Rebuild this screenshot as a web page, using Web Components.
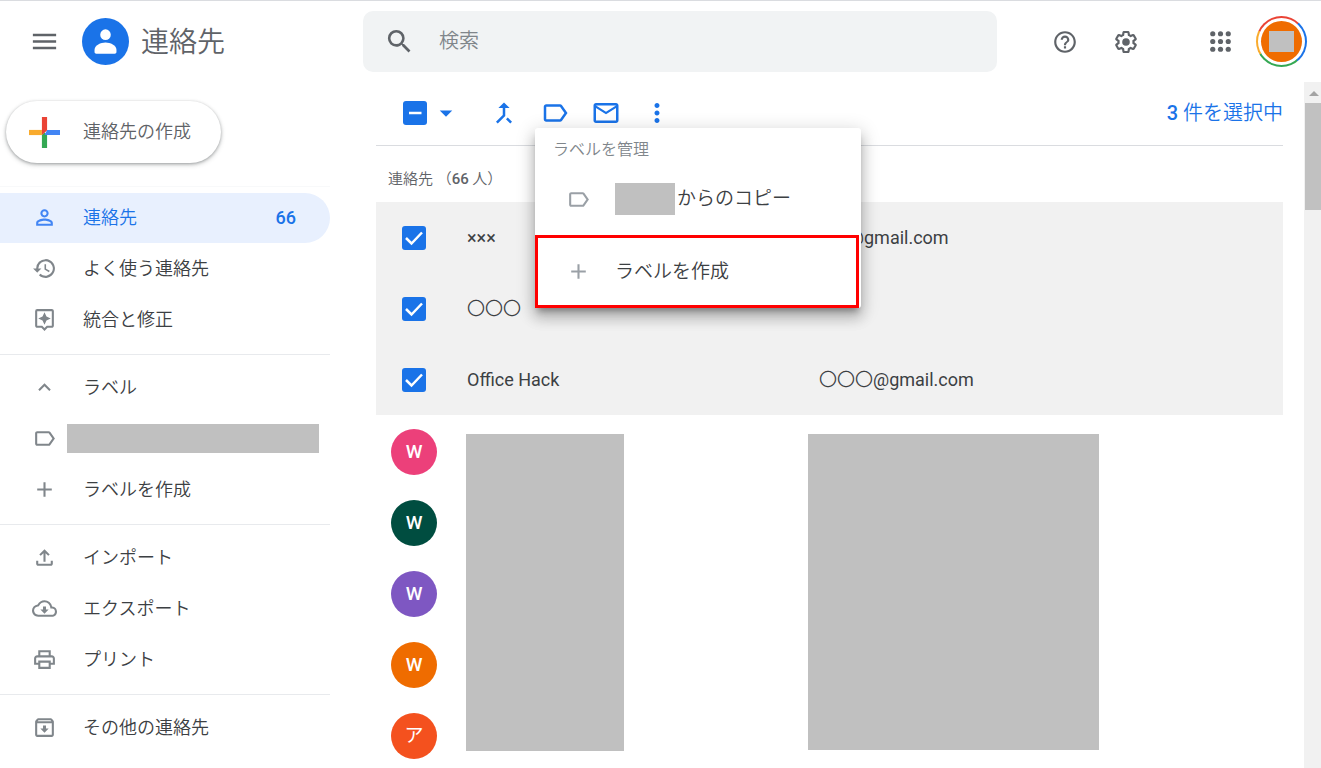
<!DOCTYPE html>
<html lang="ja">
<head>
<meta charset="utf-8">
<title>連絡先</title>
<style>
  html, body { margin: 0; height: 100%; overflow: hidden; }
  body { font-family: Roboto, "Noto Sans CJK JP", sans-serif; color: #3c4043; background: #fff; }
</style>
</head>
<body>
<contacts-app></contacts-app>
<script>
const ICONS = {
  menu: '<path d="M3 18h18v-2H3v2zm0-5h18v-2H3v2zm0-7v2h18V6H3z"/>',
  search: '<path d="M15.5 14h-.79l-.28-.27A6.47 6.47 0 0 0 16 9.5 6.5 6.5 0 1 0 9.5 16c1.61 0 3.09-.59 4.23-1.57l.27.28v.79l5 4.99L20.49 19l-4.99-5zm-6 0a4.5 4.5 0 1 1 0-9 4.5 4.5 0 0 1 0 9z"/>',
  help: '<path d="M11 18h2v-2h-2v2zm1-16C6.48 2 2 6.48 2 12s4.48 10 10 10 10-4.48 10-10S17.52 2 12 2zm0 18c-4.41 0-8-3.59-8-8s3.59-8 8-8 8 3.59 8 8-3.59 8-8 8zm0-14a4 4 0 0 0-4 4h2a2 2 0 1 1 4 0c0 2-3 1.750-3 5h2c0-2.250 3-2.500 3-5a4 4 0 0 0-4-4z"/>',
  settings: '<path d="M13.850 22.250h-3.700c-.740 0-1.360-.540-1.450-1.270l-.270-1.890c-.270-.140-.530-.290-.790-.460l-1.800.720c-.700.260-1.470-.030-1.810-.650L2.200 15.530c-.350-.660-.200-1.440.360-1.880l1.530-1.190c-.010-.150-.020-.300-.020-.460 0-.150.010-.310.020-.460l-1.520-1.190c-.590-.450-.740-1.260-.370-1.880l1.850-3.190c.340-.620 1.110-.900 1.790-.630l1.810.730c.260-.170.520-.320.780-.460l.270-1.910c.090-.700.710-1.250 1.440-1.250h3.700c.740 0 1.360.540 1.450 1.270l.270 1.890c.270.140.530.290.790.460l1.800-.720c.710-.260 1.480.030 1.820.650l1.840 3.180c.360.660.200 1.440-.360 1.880l-1.520 1.190c.010.150.020.300.020.460s-.010.310-.020.460l1.520 1.190c.560.450.720 1.230.370 1.860l-1.860 3.220c-.340.620-1.110.900-1.800.630l-1.800-.720c-.260.170-.520.320-.780.460l-.270 1.910c-.100.680-.720 1.220-1.460 1.220zm-3.230-2h2.760l.370-2.550.530-.220c.440-.180.880-.440 1.340-.780l.450-.340 2.380.960 1.380-2.400-2.030-1.580.070-.560c.030-.260.060-.510.060-.780s-.030-.530-.060-.780l-.070-.560 2.030-1.580-1.390-2.400-2.390.960-.450-.350c-.420-.320-.870-.580-1.330-.770l-.520-.220-.370-2.550h-2.760l-.370 2.550-.530.210c-.440.190-.880.440-1.340.790l-.450.330-2.380-.950-1.390 2.390 2.030 1.580-.070.560a7 7 0 0 0-.060.790c0 .260.020.530.060.780l.070.560-2.030 1.580 1.380 2.400 2.390-.960.450.350c.430.330.860.580 1.330.770l.530.220.380 2.550z"/><circle cx="12" cy="12" r="3.500"/>',
  apps: '<g><circle cx="6" cy="6" r="2"/><circle cx="12" cy="6" r="2"/><circle cx="18" cy="6" r="2"/><circle cx="6" cy="12" r="2"/><circle cx="12" cy="12" r="2"/><circle cx="18" cy="12" r="2"/><circle cx="6" cy="18" r="2"/><circle cx="12" cy="18" r="2"/><circle cx="18" cy="18" r="2"/></g>',
  person: '<path d="M12 12c2.210 0 4-1.790 4-4s-1.790-4-4-4-4 1.790-4 4 1.790 4 4 4zm0-6a2 2 0 1 1 0 4 2 2 0 0 1 0-4zm0 7c-2.670 0-8 1.340-8 4v3h16v-3c0-2.660-5.330-4-8-4zm6 5H6v-.990c.2-.720 3.300-2.010 6-2.010s5.800 1.290 6 2v1z"/>',
  history: '<path d="M13 3a9 9 0 0 0-9 9H1l3.890 3.890.070.140L9 12H6a7 7 0 1 1 2.060 4.940l-1.420 1.420A9 9 0 1 0 13 3zm-1 5v5l4.250 2.520.770-1.280-3.520-2.090V8z"/>',
  fix: '<path d="M19 2H5a2 2 0 0 0-2 2v14c0 1.100.900 2 2 2h4l3 3 3-3h4c1.100 0 2-.900 2-2V4c0-1.100-.900-2-2-2zm0 16h-4.830L12 20.170 9.830 18H5V4h14v14zm-7-1 1.880-4.120L18 11l-4.120-1.880L12 5l-1.880 4.120L6 11l4.120 1.880z"/>',
  up: '<path d="m12 8-6 6 1.410 1.410L12 10.830l4.590 4.580L18 14z"/>',
  label: '<path d="M17.630 5.840C17.270 5.330 16.670 5 16 5L5 5.010C3.900 5.010 3 5.900 3 7v10c0 1.100.900 1.990 2 1.990L16 19c.670 0 1.270-.330 1.630-.840L22 12l-4.370-6.160zM16 17H5V7h11l3.550 5L16 17z"/>',
  plus: '<path d="M19 13h-6v6h-2v-6H5v-2h6V5h2v6h6v2z"/>',
  upload: '<path d="M11 16h2V7.830l2.590 2.580L17 9l-5-5-5 5 1.410 1.410L11 7.830V16zm7-1v3H6v-3H4v3c0 1.100.900 2 2 2h12c1.100 0 2-.900 2-2v-3h-2z"/>',
  cloud: '<path d="M19.350 10.040A7.490 7.490 0 0 0 12 4C9.110 4 6.600 5.640 5.350 8.040A5.994 5.994 0 0 0 0 14c0 3.310 2.690 6 6 6h13c2.760 0 5-2.240 5-5 0-2.640-2.050-4.780-4.650-4.960zM19 18H6c-2.210 0-4-1.790-4-4 0-2.050 1.530-3.760 3.560-3.970l1.070-.110.500-.950A5.469 5.469 0 0 1 12 6c2.620 0 4.880 1.860 5.390 4.430l.300 1.500 1.530.110A2.980 2.980 0 0 1 22 15c0 1.650-1.350 3-3 3zm-5.550-8h-2.900v3H8l4 4 4-4h-2.550z"/>',
  print: '<path d="M19 8h-1V3H6v5H5c-1.660 0-3 1.340-3 3v6h4v4h12v-4h4v-6c0-1.660-1.340-3-3-3zM8 5h8v3H8V5zm8 12v2H8v-4h8v2zm2-2v-2H6v2H4v-4c0-.550.450-1 1-1h14c.550 0 1 .450 1 1v4h-2z"/>',
  archive: '<path d="m20.540 5.230-1.390-1.680C18.880 3.210 18.470 3 18 3H6c-.470 0-.880.210-1.160.550L3.460 5.230C3.170 5.570 3 6.020 3 6.500V19c0 1.100.900 2 2 2h14c1.100 0 2-.900 2-2V6.500c0-.480-.170-.930-.460-1.270zM6.240 5h11.520l.830 1H5.420l.820-1zM5 19V8h14v11H5zm8.450-9h-2.900v3H8l4 4 4-4h-2.550z"/>',
  merge: '<path d="M17 20.410L18.410 19 15 15.590 13.590 17 17 20.410zM7.500 8H11v5.590L5.590 19 7 20.410l6-6V8h3.500L12 3.500 7.500 8z"/>',
  mail: '<path d="M20 4H4c-1.100 0-1.990.900-1.990 2L2 18c0 1.100.900 2 2 2h16c1.100 0 2-.900 2-2V6c0-1.100-.900-2-2-2zm0 14H4V8l8 5 8-5v10zm-8-7L4 6h16l-8 5z"/>',
  more: '<path d="M12 8c1.100 0 2-.900 2-2s-.900-2-2-2-2 .900-2 2 .900 2 2 2zm0 2c-1.100 0-2 .900-2 2s.900 2 2 2 2-.900 2-2-.900-2-2-2zm0 6c-1.100 0-2 .900-2 2s.900 2 2 2 2-.900 2-2-.900-2-2-2z"/>',
  caret: '<path d="m7 10 5 5 5-5z"/>',
  google: '<path fill="#ea4335" d="M10 0h4v10l-4 4z"/><path fill="#f9ab2d" d="M0 10h10v4H0z"/><path fill="#34a853" d="M10 14l2-2 2 2v10h-4z"/><path fill="#4285f4" d="M14 10h10v4H12z"/><path fill="#ea4335" d="M10 10h4l-4 4z"/>',
  logo: '<circle cx="12" cy="12" r="12" fill="#1a73e8"/><circle cx="12" cy="8.500" r="2.700" fill="#fff"/><path fill="#fff" d="M6.400 16.200c0-2.300 3.200-3.700 5.600-3.700s5.600 1.400 5.600 3.700v1.100c0 .500-.400.900-.900.900H7.300c-.5 0-.9-.4-.9-.9z"/>'
};

const define = (name, html, setup) => {
  const template = document.createElement('template');
  template.innerHTML = html;
  customElements.define(name, class extends HTMLElement {
    constructor() {
      super();
      this.attachShadow({ mode: 'open' }).append(template.content.cloneNode(true));
    }
    connectedCallback() { if (setup) setup(this, this.shadowRoot); }
  });
};

define('ui-icon', `
  <style>
    :host { display: block; flex: none; width: var(--icon-size, 25px); height: var(--icon-size, 25px); }
    svg { display: block; width: 100%; height: 100%; fill: currentColor; }
  </style>
  <svg viewBox="0 0 24 24" aria-hidden="true"></svg>`,
  (host, root) => { root.querySelector('svg').innerHTML = ICONS[host.getAttribute('name')]; });

define('icon-button', `
  <style>
    :host { display: block; flex: none; position: relative; }
    button { display: grid; place-items: center; width: var(--button-width, 40px); height: 40px; padding: 0; border: 0; background: none; color: inherit; cursor: pointer; }
  </style>
  <button type="button"><slot></slot></button>`,
  (host, root) => root.querySelector('button').setAttribute('aria-label', host.getAttribute('label')));

define('check-box', `
  <style>
    :host { display: grid; justify-content: start; }
    input, svg { grid-area: 1 / 1; width: 24px; height: 24px; margin: 0; }
    input { appearance: none; border-radius: 3px; background: #1a73e8; }
    svg { pointer-events: none; fill: none; stroke: #fff; stroke-width: 2.500; }
  </style>
  <input type="checkbox">
  <svg viewBox="0 0 24 24" aria-hidden="true"><path/></svg>`,
  (host, root) => {
    const mixed = host.hasAttribute('mixed');
    const input = root.querySelector('input');
    input.checked = !mixed;
    input.indeterminate = mixed;
    input.setAttribute('aria-label', host.getAttribute('label'));
    root.querySelector('path').setAttribute('d', mixed ? 'M6 12h12.500' : 'M4 12l5.500 5.500L20 6.500');
  });

define('redacted-block', `
  <style>:host { display: block; flex: none; background: #c0c0c0; }</style>`);

define('account-avatar', `
  <style>
    :host { display: block; flex: none; }
    button { display: grid; place-items: center; width: 51px; height: 51px; padding: 0; border: 0; border-radius: 50%; cursor: pointer;
      background: conic-gradient(#ea4335 0 42deg, #1a73e8 42deg 140deg, #34a853 140deg 240deg, #f9ab2d 240deg 295deg, #ea4335 295deg); }
    .gap { display: grid; place-items: center; width: 47px; height: 47px; border-radius: 50%; background: #fff; }
    .disc { display: grid; place-items: center; width: 41px; height: 41px; border-radius: 50%; background: #ef6c00; }
    redacted-block { width: 25px; height: 21px; }
  </style>
  <button type="button" aria-label="アカウント"><span class="gap"><span class="disc"><redacted-block></redacted-block></span></span></button>`);

define('app-header', `
  <style>
    :host { display: flex; align-items: center; height: 81px; border-top: 1px solid #dadce0; color: #5f6368; --icon-size: 26px; }
    .brand { box-sizing: border-box; display: flex; align-items: center; width: 363px; padding-left: 24px; --icon-size: 31px; }
    .brand a { display: flex; align-items: center; gap: 12px; margin-left: 18px; color: inherit; text-decoration: none; font-size: 28px; line-height: 40px; font-weight: 350; --icon-size: 47px; }
    .brand span { padding-top: 2px; }
    form { flex: 1; display: flex; align-items: center; height: 61px; border-radius: 10px; background: #f1f3f4; --icon-size: 31px; }
    form icon-button { margin: 0 20px 0 16px; }
    input { flex: 1; min-width: 0; padding: 0 0 2px; border: 0; outline: 0; background: none; font: 350 20px/32px Roboto, "Noto Sans CJK JP", sans-serif; color: #3c4043; }
    input::placeholder { color: #80868b; opacity: 1; }
    nav { box-sizing: border-box; display: flex; align-items: center; justify-content: flex-end; width: 324px; padding-right: 14px; }
    .settings { margin-left: 21px; }
    .apps { margin: 0 16px 0 54px; --icon-size: 31px; }
  </style>
  <div class="brand">
    <icon-button label="メインメニュー"><ui-icon name="menu"></ui-icon></icon-button>
    <a href="#"><ui-icon name="logo"></ui-icon><span>連絡先</span></a>
  </div>
  <form role="search">
    <icon-button label="検索"><ui-icon name="search"></ui-icon></icon-button>
    <input type="text" placeholder="検索" aria-label="検索">
  </form>
  <nav>
    <icon-button label="ヘルプ"><ui-icon name="help"></ui-icon></icon-button>
    <icon-button class="settings" label="設定"><ui-icon name="settings"></ui-icon></icon-button>
    <icon-button class="apps" label="アプリ"><ui-icon name="apps"></ui-icon></icon-button>
    <account-avatar></account-avatar>
  </nav>`);

define('nav-item', `
  <style>
    :host { display: block; font-size: 18px; line-height: 27px; font-weight: 350; }
    a { box-sizing: border-box; display: flex; align-items: center; height: 50px; padding: 0 34px 1px 32px; border-radius: 0 25px 25px 0; color: inherit; text-decoration: none; }
    ui-icon { margin-right: 26px; color: #80868b; }
    .text { flex: 1; }
    :host([active]) { color: #1a73e8; }
    :host([active]) a { background: #e8f0fe; }
    :host([active]) ui-icon { color: #4285f4; }
    :host([redacted]) ui-icon { margin-right: 10px; }
    :host([redacted]) a { padding-right: 11px; }
    ::slotted([slot=count]) { font-weight: 500; }
  </style>
  <a href="#"><ui-icon></ui-icon><span class="text"><slot></slot></span><slot name="count"></slot></a>`,
  (host, root) => {
    const icon = document.createElement('ui-icon');
    icon.setAttribute('name', host.getAttribute('icon'));
    root.querySelector('ui-icon').replaceWith(icon);
  });

define('nav-section', `
  <style>
    :host { display: grid; gap: 1px; padding: 8px 0 9px; border-top: 1px solid #e8eaed; }
    :host(:first-of-type) { padding-top: 6px; border-color: #f8f9fa; }
  </style>
  <slot></slot>`);

define('contacts-sidebar', `
  <style>
    :host { display: block; width: 330px; flex: none; }
    .create { display: flex; align-items: center; gap: 23px; height: 62px; margin: 19px 0 23px 6px; padding: 0 30px 0 23px; border: 0; border-radius: 31px; background: #fff; color: #5f6368;
      font: 350 18px/26px Roboto, "Noto Sans CJK JP", sans-serif; box-shadow: 0 1px 3px rgba(60,64,67,.4), 0 2px 4px 1px rgba(60,64,67,.15); --icon-size: 31px; cursor: pointer; }
    redacted-block { height: 29px; }
  </style>
  <button class="create" type="button"><ui-icon name="google"></ui-icon><span>連絡先の作成</span></button>
  <nav>
    <nav-section>
      <nav-item icon="person" active>連絡先<span slot="count">66</span></nav-item>
      <nav-item icon="history">よく使う連絡先</nav-item>
      <nav-item icon="fix">統合と修正</nav-item>
    </nav-section>
    <nav-section>
      <nav-item icon="up">ラベル</nav-item>
      <nav-item icon="label" redacted><redacted-block></redacted-block></nav-item>
      <nav-item icon="plus">ラベルを作成</nav-item>
    </nav-section>
    <nav-section>
      <nav-item icon="upload">インポート</nav-item>
      <nav-item icon="cloud">エクスポート</nav-item>
      <nav-item icon="print">プリント</nav-item>
    </nav-section>
    <nav-section>
      <nav-item icon="archive">その他の連絡先</nav-item>
    </nav-section>
  </nav>`);

define('label-menu', `
  <style>
    :host { display: block; width: 326px; padding-top: 9px; box-sizing: border-box; border-radius: 3px; background: #fff; color: #3c4043; font-weight: 350;
      box-shadow: 0 6px 6px -3px rgba(0,0,0,.3), 0 10px 13px 1px rgba(0,0,0,.16), 0 4px 18px 3px rgba(0,0,0,.14); }
    h2 { margin: 0; padding: 0 18px; height: 28px; font-size: 16px; line-height: 26px; font-weight: 350; color: #80868b; }
    button { box-sizing: border-box; display: flex; align-items: center; gap: 24px; width: 100%; height: 70px; padding: 0 31px 2px; border: 0; background: none; color: inherit; font: 350 19px/28px Roboto, "Noto Sans CJK JP", sans-serif; cursor: pointer; }
    button.focus { width: 324px; height: 73px; padding-bottom: 0; outline: 3px solid #f00; outline-offset: -3px; }
    ui-icon { color: #9aa0a6; }
    .text { display: flex; align-items: center; gap: 2px; }
    redacted-block { width: 60px; height: 32px; }
  </style>
  <h2>ラベルを管理</h2>
  <button type="button"><ui-icon name="label"></ui-icon><span class="text"><redacted-block></redacted-block><span>からのコピー</span></span></button>
  <button type="button" class="focus"><ui-icon name="plus"></ui-icon><span class="text">ラベルを作成</span></button>`);

define('selection-toolbar', `
  <style>
    :host { box-sizing: border-box; display: flex; align-items: center; height: 64px; padding: 0 0 1px 27px; border-bottom: 1px solid #dadce0; color: #1a73e8; --icon-size: 30px; }
    .pick { --button-width: 30px; margin: 0 23px 0 4px; }
    .actions { display: flex; gap: 11px; }
    .label { position: relative; }
    label-menu { position: absolute; left: 0; top: 35px; z-index: 2; --icon-size: 25px; }
    .status { margin-left: auto; font-size: 20px; line-height: 28px; font-weight: 350; }
    b { font-weight: 500; }
  </style>
  <check-box mixed label="すべて選択"></check-box>
  <icon-button class="pick" label="選択オプション"><ui-icon name="caret"></ui-icon></icon-button>
  <div class="actions">
    <icon-button label="統合"><ui-icon name="merge"></ui-icon></icon-button>
    <div class="label">
      <icon-button label="ラベル"><ui-icon name="label"></ui-icon></icon-button>
      <label-menu></label-menu>
    </div>
    <icon-button label="メール"><ui-icon name="mail"></ui-icon></icon-button>
    <icon-button label="その他"><ui-icon name="more"></ui-icon></icon-button>
  </div>
  <span class="status"><b>3</b> 件を選択中</span>`);

define('initial-avatar', `
  <style>
    :host { display: grid; place-items: center; width: 46px; height: 46px; border-radius: 50%; color: #fff; font-size: 19px; line-height: 26px; font-weight: 500; }
    :host([kana]) { font-weight: 400; }
  </style>
  <span><slot></slot></span>`,
  host => { host.style.background = host.getAttribute('color'); });

define('contact-table', `
  <style>
    :host { display: block; }
    table { width: 100%; table-layout: fixed; border-collapse: collapse; font-size: 18px; line-height: 26px; font-weight: 400; }
    caption { height: 45px; padding: 11px 0 0 12px; text-align: left; font-size: 15px; line-height: 45px; font-weight: 350; color: #5f6368; }
    caption b { font-weight: 500; }
    col.pick { width: 90px; }
    col.name { width: 342px; }
    td { height: 71px; padding: 0; }
    .selected { background: #f1f1f1; }
    .selected td:nth-child(1) { padding-left: 26px; }
    .selected td:nth-child(2) { padding-left: 1px; }
    .selected td:nth-child(3) { padding-left: 11px; }
    .others { border-top: 1px solid #fff; }
    .others td { padding-left: 15px; }
    .others td[rowspan] { padding: 18px 0 0; vertical-align: top; }
    .names { width: 158px; height: 317px; }
    .mails { width: 291px; height: 316px; }
    .ja { font-weight: 350; }
  </style>
  <table>
    <caption>連絡先 （<b>66</b> 人）</caption>
    <colgroup><col class="pick"><col class="name"><col></colgroup>
    <tbody class="selected">
      <tr><td><check-box label="×××"></check-box></td><td>×××</td><td>×××@gmail.com</td></tr>
      <tr><td><check-box label="〇〇〇"></check-box></td><td><span class="ja">〇〇〇</span></td><td></td></tr>
      <tr><td><check-box label="Office Hack"></check-box></td><td>Office Hack</td><td><span class="ja">〇〇〇</span>@gmail.com</td></tr>
    </tbody>
    <tbody class="others">
      <tr><td><initial-avatar color="#ec407a">W</initial-avatar></td><td rowspan="5"><redacted-block class="names"></redacted-block></td><td rowspan="5"><redacted-block class="mails"></redacted-block></td></tr>
      <tr><td><initial-avatar color="#004d40">W</initial-avatar></td></tr>
      <tr><td><initial-avatar color="#7e57c2">W</initial-avatar></td></tr>
      <tr><td><initial-avatar color="#ef6c00">W</initial-avatar></td></tr>
      <tr><td><initial-avatar kana color="#f4511e">ア</initial-avatar></td></tr>
    </tbody>
  </table>`);

define('scroll-track', `
  <style>
    :host { display: flex; flex-direction: column; align-items: flex-end; flex: none; width: 17px; background: #f1f1f1; }
    svg { display: block; width: 17px; height: 21px; fill: #a3a3a3; }
    .thumb { width: 16px; height: 107px; background: #c1c1c1; }
  </style>
  <svg viewBox="0 0 17 21" aria-hidden="true"><path d="M5 14l5-5 5 5z"/></svg>
  <div class="thumb"></div>`);

define('contacts-app', `
  <style>
    :host { display: flex; flex-direction: column; height: 100vh; overflow: hidden; }
    .body { flex: 1; min-height: 0; display: flex; }
    main { flex: 1; min-width: 0; margin: 0 21px 0 46px; }
  </style>
  <app-header></app-header>
  <div class="body">
    <contacts-sidebar></contacts-sidebar>
    <main>
      <selection-toolbar></selection-toolbar>
      <contact-table></contact-table>
    </main>
    <scroll-track></scroll-track>
  </div>`);
</script>
</body>
</html>
